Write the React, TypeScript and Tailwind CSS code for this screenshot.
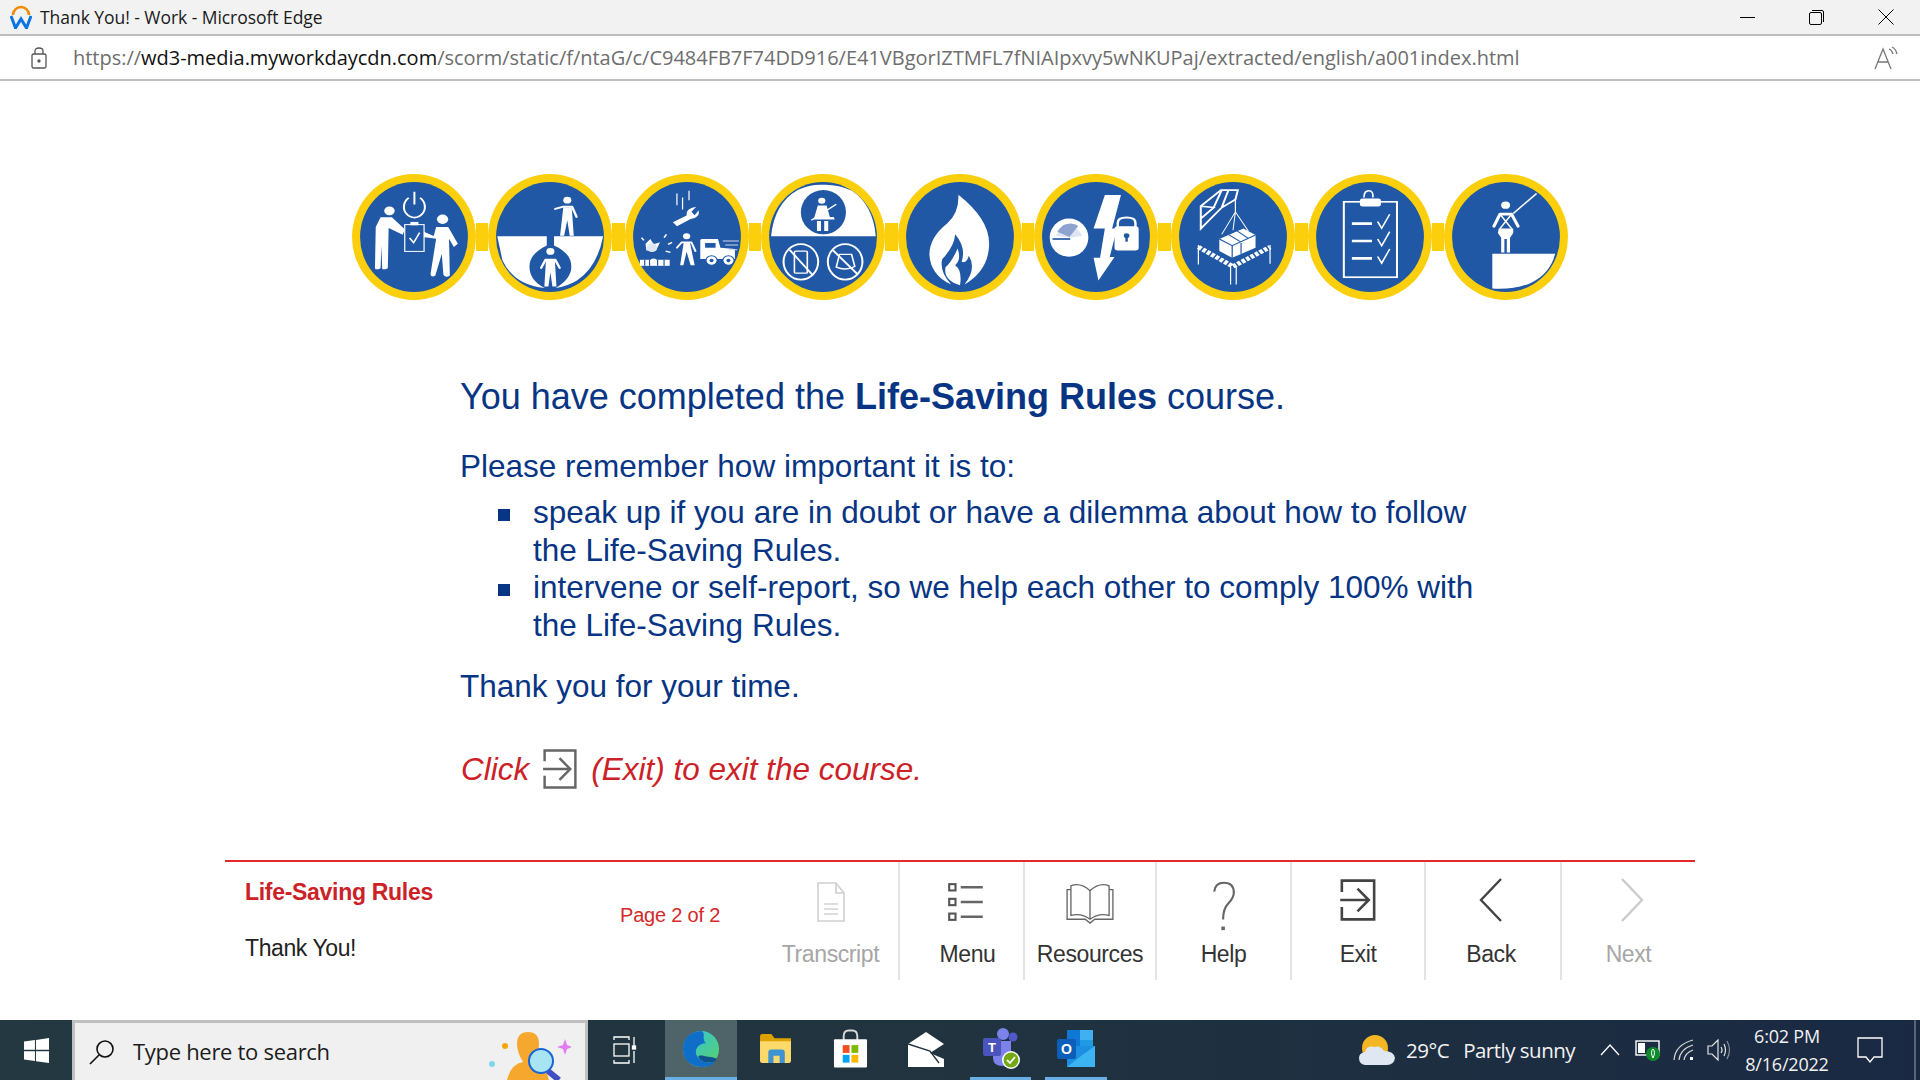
import React from "react";

const W = "#ffffff";
const Blue = "#2158a5";

function Badge({ cx, cy, children }: { cx: number; cy: number; children?: React.ReactNode }) {
  return (
    <svg viewBox="0 0 308 376" preserveAspectRatio="none" className="w-[124px] h-[126px] shrink-0 relative z-10">
      <ellipse cx="154" cy="188" rx="154" ry="188" fill="#fbcf0c" />
      <ellipse cx="154" cy="188" rx="134" ry="164" fill={Blue} />
      <g transform={`translate(${154 - cx} ${188 - cy})`}>{children}</g>
    </svg>
  );
}

function Link() {
  return <div className="w-[12.6px] h-[28px] bg-[#fbcf0c] shrink-0" />;
}

function Body({ d, w = 9, c = W }: { d: string; w?: number; c?: string }) {
  return <path d={d} fill="none" stroke={c} strokeWidth={w} strokeLinecap="round" strokeLinejoin="round" />;
}

function Chain() {
  return (
    <div className="flex items-center w-[1217px] mx-auto">
      <Badge cx={183} cy={235}>
        <circle cx="122" cy="157" r="13" fill={W} />
        <path d="M88 205 L100 176 H128 L160 212 L155 228 L120 208 L118 328 Q104 335 104 328 L102 262 L100 328 Q88 335 86 328 Z" fill={W} />
        <circle cx="254" cy="182" r="14" fill={W} />
        <path d="M205 218 L232 232 L238 205 H268 L292 255 L282 265 L270 240 L272 350 Q262 358 256 348 L252 285 L236 350 Q226 358 224 346 L238 240 L205 235 Z" fill={W} />
        <rect x="160" y="198" width="48" height="80" fill={Blue} stroke={W} strokeWidth="3" />
        <rect x="174" y="190" width="20" height="10" fill={W} />
        <path d="M172 238 L182 252 L197 222" fill="none" stroke={W} strokeWidth="4" />
        <path d="M170 118 A26 32 0 1 0 198 118" fill="none" stroke={W} strokeWidth="5" />
        <path d="M184 100 V138" stroke={W} strokeWidth="5" />
      </Badge>
      <Link />
      <Badge cx={523} cy={230}>
        <path d="M392 228 H515 V255 Q472 280 472 318 Q472 360 510 382 Q435 375 405 300 Z" fill={W} />
        <path d="M533 228 H655 Q640 320 590 360 Q565 378 537 382 Q576 355 576 318 Q576 278 533 255 Z" fill={W} />
        <circle cx="566" cy="120" r="10" fill={W} />
        <Body d="M536 146 L554 140 H578 L589 170" w={6} />
        <path d="M556 142 L548 226 H558 L566 180 L572 226 H582 L577 142 Z" fill={W} />
        <circle cx="524" cy="273" r="10" fill={W} />
        <Body d="M501 322 L512 298 H536 L547 322" w={6} />
        <path d="M513 298 L509 378 H519 L524 335 L529 378 H539 L535 298 Z" fill={W} />
      </Badge>
      <Link />
      <Badge cx={863} cy={230}>
        <path d="M838 100 V135 M852 112 V148 M868 92 V120" stroke={W} strokeWidth="3" fill="none" />
        <path d="M828 186 L862 166 Q858 146 886 140 L874 155 L882 165 L892 150 Q896 172 872 176 L838 198 Z" fill={W} />
        <circle cx="862" cy="228" r="9" fill={W} />
        <Body d="M838 262 L850 246 H874 L884 272" w={5} />
        <path d="M855 245 L846 314 H854 L862 274 L872 314 H882 L870 245 Z" fill={W} />
        <path d="M760 250 L772 236 L780 252 L796 246 L786 270 L762 270 Z" fill={W} />
        <circle cx="776" cy="262" r="13" fill="#dfe7f2" />
        <path d="M806 232 L812 222 M816 252 L826 246 M810 272 L822 276 M756 240 L750 232" stroke={W} strokeWidth="4" />
        <path d="M746 298 H820 V316 H746 Z" fill={W} />
        <path d="M758 298 V316 M770 298 V316 M790 298 V316 M806 298 V316" stroke={Blue} strokeWidth="3" />
        <circle cx="780" cy="302" r="8" fill={W} />
        <path d="M896 290 V240 Q896 236 902 236 H940 L946 262 L982 266 V296 H896 Z" fill={W} />
        <path d="M908 248 H934 V262 H908 Z" fill={Blue} />
        <circle cx="924" cy="300" r="14" fill={W} stroke={Blue} strokeWidth="3" />
        <circle cx="924" cy="300" r="5" fill={Blue} />
        <circle cx="966" cy="300" r="14" fill={W} stroke={Blue} strokeWidth="3" />
        <circle cx="966" cy="300" r="5" fill={Blue} />
        <path d="M952 242 H992 M958 254 H990 M966 268 H988" stroke="#cfd9ea" strokeWidth="3" />
      </Badge>
      <Link />
      <Badge cx={1203} cy={230}>
        <path d="M1074 228 Q1082 130 1140 90 Q1172 72 1203 74 Q1240 72 1275 92 Q1328 135 1334 228 Z" fill={W} />
        <ellipse cx="1204" cy="156" rx="56" ry="66" fill={Blue} />
        <circle cx="1200" cy="122" r="9" fill={W} />
        <path d="M1190 136 H1212 L1220 170 H1230 L1232 178 H1180 L1190 136 Z M1188 182 V212 H1198 V182 Z M1206 182 V212 H1216 V182 Z" fill={W} />
        <path d="M1174 180 L1236 132" stroke={W} strokeWidth="4" />
        <ellipse cx="1148" cy="304" rx="43" ry="53" fill="none" stroke={W} strokeWidth="5" />
        <rect x="1132" y="272" width="32" height="66" rx="3" fill="none" stroke={W} strokeWidth="4" />
        <path d="M1120 268 L1176 342" stroke={W} strokeWidth="5" />
        <ellipse cx="1258" cy="304" rx="43" ry="53" fill="none" stroke={W} strokeWidth="5" />
        <path d="M1236 320 L1244 282 H1274 L1282 318 Q1260 332 1236 320 Z" fill="none" stroke={W} strokeWidth="4" />
        <path d="M1228 270 L1288 340" stroke={W} strokeWidth="5" />
      </Badge>
      <Link />
      <Badge cx={154} cy={188}>
        <path d="M150 62 Q232 140 226 218 Q222 290 165 330 Q196 282 176 244 Q170 268 158 262 Q170 220 142 180 Q140 216 110 254 Q102 290 132 330 Q80 300 78 240 Q78 190 122 148 Q152 116 150 62 Z" fill={W} />
        <path d="M148 222 Q158 256 142 272 Q160 288 154 332 Q112 318 118 278 Q134 262 148 222 Z" fill={W} />
      </Badge>
      <Link />
      <Badge cx={340} cy={230}>
        <ellipse cx="273" cy="232" rx="48" ry="57" fill={W} />
        <path d="M240 226 A37 46 0 0 1 306 226 L274 232 Z" fill="#dfe5f2" />
        <path d="M244 214 A37 46 0 0 1 296 197 L274 230 Z" fill="#8fa3d0" />
        <path d="M232 236 H276" stroke={Blue} strokeWidth="5" />
        <path d="M362 105 H402 L380 205 H392 L374 290 H386 L346 360 L334 292 H350 L362 205 H334 Z" fill={W} />
        <path d="M394 200 V188 Q394 172 416 172 Q438 172 438 188 V205" fill="none" stroke={W} strokeWidth="6" />
        <rect x="386" y="198" width="60" height="72" rx="8" fill={W} />
        <circle cx="416" cy="226" r="7" fill={Blue} />
        <rect x="413" y="228" width="6" height="16" fill={Blue} />
      </Badge>
      <Link />
      <Badge cx={680} cy={230}>
        <path d="M600 138 L650 90 H692 L686 118 L652 142 L600 205 Z M600 138 L632 142 L600 175 M632 142 L652 90 M652 142 L668 92" fill="none" stroke={W} strokeWidth="5" />
        <path d="M686 118 V155" stroke={W} strokeWidth="3" />
        <path d="M686 155 L652 222 M686 155 L718 212 M686 155 L680 210" stroke={W} strokeWidth="2.5" />
        <path d="M646 236 L706 205 L736 224 L736 262 L678 292 L646 272 Z" fill={W} />
        <path d="M646 236 L678 256 L736 224 M678 256 V292 M668 222 L698 244 M690 212 L718 234 M700 248 V280" fill="none" stroke={Blue} strokeWidth="3" />
        <path d="M594 260 L680 318 L772 260" fill="none" stroke={W} strokeWidth="13" strokeDasharray="9 4" />
        <path d="M594 254 V312 M772 254 V310 M674 318 V372 M688 318 V372" stroke={W} strokeWidth="3" />
      </Badge>
      <Link />
      <Badge cx={1019} cy={230}>
        <rect x="954" y="125" width="132" height="225" fill="none" stroke={W} strokeWidth="5" />
        <rect x="994" y="115" width="52" height="24" rx="6" fill={W} />
        <path d="M1004 112 Q1004 92 1016 92 Q1028 92 1026 112" fill="none" stroke={W} strokeWidth="4" />
        <path d="M974 190 H1024 M974 242 H1024 M974 294 H1024" stroke={W} strokeWidth="8" />
        <path d="M1038 184 L1048 204 L1068 162 M1038 236 L1048 256 L1068 214 M1038 288 L1048 308 L1068 266" fill="none" stroke={W} strokeWidth="4" />
      </Badge>
      <Link />
      <Badge cx={1360} cy={230}>
        <path d="M1326 280 H1482 Q1470 340 1420 368 Q1380 388 1326 384 Z" fill={W} />
        <circle cx="1359" cy="135" r="11" fill={W} />
        <Body d="M1330 198 L1345 162 H1374 L1390 198" w={8} />
        <path d="M1342 205 H1378 V218 L1370 232 V276 H1362 V236 H1356 V276 H1348 V232 L1340 218 Z" fill={W} />
        <path d="M1345 162 L1374 205 M1374 162 L1345 205" stroke={W} strokeWidth="4" />
        <path d="M1378 160 L1436 100" stroke={W} strokeWidth="4" />
      </Badge>
    </div>
  );
}

function ExitIcon({ className, color = "#444444" }: { className?: string; color?: string }) {
  return (
    <svg viewBox="0 0 33 39" className={className}>
      <path d="M1.5 12 V1.5 H31.5 V37.5 H1.5 V26" fill="none" stroke={color} strokeWidth="2.4" />
      <path d="M0 19.5 H26 M16 9 L26.5 19.5 L16 30" fill="none" stroke={color} strokeWidth="2.4" />
    </svg>
  );
}

function NavItem({ label, width, muted, border = true, extra = "", children }: { label: string; width: string; muted?: boolean; border?: boolean; extra?: string; children: React.ReactNode }) {
  return (
    <div className={`${width} ${extra} h-[118px] shrink-0 flex flex-col items-center ${border ? "border-r-2 border-[#e4e4e4]" : ""}`}>
      <div className="h-[66px] w-full flex items-center justify-center pt-[10px]">{children}</div>
      <div className={`text-[23px] leading-[26px] mt-[13px] tracking-[-0.4px] ${muted ? "text-[#a6a6a6]" : "text-[#333333]"}`}>{label}</div>
    </div>
  );
}

function Footer() {
  return (
    <div className="w-[1470px] mx-auto border-t-2 border-[#e32a2a] flex">
      <div className="flex-1 pl-[20px] pt-[17px]">
        <div className="text-[23px] leading-[26px] font-bold text-[#cc2127] tracking-[-0.3px]">Life-Saving Rules</div>
        <div className="text-[23px] leading-[26px] text-[#222222] mt-[30px] tracking-[-0.4px]">Thank You!</div>
      </div>
      <div className="w-[151px] pt-[40px] text-[20px] leading-[26px] text-[#d42a2a] tracking-[-0.2px]">Page 2 of 2</div>
      <NavItem label="Transcript" width="w-[129px]" extra="pr-[8px]" muted>
        <svg viewBox="0 0 28 40" className="w-[30px] h-[40px] mt-[3px]">
          <path d="M1 1 H19 L27 11 V39 H1 Z M19 1 V11 H27" fill="none" stroke="#cfcfcf" strokeWidth="1.6" />
          <path d="M7 22 H21 M7 27 H21 M7 32 H21" stroke="#dddddd" strokeWidth="2" />
        </svg>
      </NavItem>
      <NavItem label="Menu" width="w-[125px]" extra="pl-[12px]">
        <svg viewBox="0 0 34 40" className="w-[44px] h-[42px] mt-[3px] mr-[3px]">
          <g fill="none" stroke="#555555" strokeWidth="2">
            <rect x="1" y="3" width="6" height="6" />
            <rect x="1" y="17" width="6" height="6" />
            <rect x="1" y="31" width="6" height="6" />
          </g>
          <path d="M12 6 H33 M12 20 H33 M12 34 H33" stroke="#666666" strokeWidth="2.4" />
        </svg>
      </NavItem>
      <NavItem label="Resources" width="w-[132px]">
        <svg viewBox="0 0 50 44" className="w-[50px] h-[42px] mt-[8px]">
          <path d="M25 8 Q15 -1 5 3 V34 Q16 31 25 38 Q34 31 45 34 V3 Q35 -1 25 8 Z M25 8 V38" fill="none" stroke="#666666" strokeWidth="1.4" />
          <path d="M5 7 H1 V38 H20 L25 42 L30 38 H49 V7 H45" fill="none" stroke="#666666" strokeWidth="1.4" />
        </svg>
      </NavItem>
      <NavItem label="Help" width="w-[135px]">
        <svg viewBox="0 0 28 56" className="w-[26px] h-[50px] mt-[12px]">
          <path d="M3 12 Q4 2 14 2 Q25 2 25 13 Q25 19 19 25 Q13 31 13 43" fill="none" stroke="#666666" strokeWidth="2.4" />
          <rect x="11" y="51" width="4" height="4" fill="#666666" />
        </svg>
      </NavItem>
      <NavItem label="Exit" width="w-[134px]">
        <ExitIcon className="w-[36px] h-[42px]" />
      </NavItem>
      <NavItem label="Back" width="w-[136px]" extra="pr-[4px]">
        <svg viewBox="0 0 24 44" className="w-[24px] h-[44px]">
          <path d="M22 1 L2 22 L22 43" fill="none" stroke="#444444" strokeWidth="2.4" />
        </svg>
      </NavItem>
      <NavItem label="Next" width="w-[133px]" muted border={false}>
        <svg viewBox="0 0 24 44" className="w-[24px] h-[44px] ml-[6px]">
          <path d="M2 1 L22 22 L2 43" fill="none" stroke="#cccccc" strokeWidth="2.4" />
        </svg>
      </NavItem>
    </div>
  );
}

function Tile({ width, on, active, children }: { width: string; on?: boolean; active?: boolean; children?: React.ReactNode }) {
  return (
    <div className={`${width} h-full shrink-0 flex items-center justify-center border-b-[3px] ${on ? "border-[#6aaee6]" : "border-transparent"} ${active ? "bg-[#4f6468]" : ""}`}>
      {children}
    </div>
  );
}

function Taskbar() {
  return (
    <div className="h-[60px] flex items-stretch bg-gradient-to-r from-[#233840] via-[#20333f] to-[#1a2943] text-white shrink-0" style={{ fontFamily: '"Open Sans", sans-serif' }}>
      <div className="w-[72px] shrink-0 flex items-center justify-center">
        <svg viewBox="0 0 24 24" className="w-[25px] h-[25px]" fill="#ffffff">
          <path d="M0 3.4 L10.5 2 V11.3 H0 Z M11.5 1.8 L24 0 V11.3 H11.5 Z M0 12.7 H10.5 V22 L0 20.6 Z M11.5 12.7 H24 V24 L11.5 22.2 Z" />
        </svg>
      </div>
      <div className="w-[516px] shrink-0 bg-[#f0f0f0] border-[3px] border-[#c0c0c0] border-b-0 flex items-center text-[#1c1c1c]">
        <svg viewBox="0 0 26 26" className="w-[26px] h-[26px] ml-[14px]" fill="none" stroke="#111111" strokeWidth="1.6">
          <circle cx="16" cy="10" r="8" />
          <path d="M10 16 L1 25" />
        </svg>
        <span className="ml-[18px] text-[22px] tracking-[-0.3px]">Type here to search</span>
        <svg viewBox="0 0 84 56" className="w-[84px] h-[56px] ml-auto mr-[14px]">
          <circle cx="5" cy="40" r="3" fill="#7fd6e6" />
          <circle cx="18" cy="22" r="3" fill="#f7a600" />
          <path d="M78 15 L80 21 L85 23 L80 25 L78 31 L76 25 L70 23 L76 21 Z" fill="#e37bf2" />
          <path d="M20 56 Q24 40 36 38 Q30 28 30 20 Q30 8 41 8 Q52 8 52 20 Q52 28 46 38 Q58 40 62 56 Z" fill="#f6a72d" />
          <circle cx="54" cy="37" r="12" fill="#a8e4f2" stroke="#1565d8" strokeWidth="2" />
          <path d="M61 47 L72 56" stroke="#3f4fc4" strokeWidth="6" />
        </svg>
      </div>
      <div className="w-[77px] pr-[4px] shrink-0 flex items-center justify-center">
        <svg viewBox="0 0 24 28" className="w-[24px] h-[28px]" fill="none" stroke="#ffffff" strokeWidth="1.3">
          <path d="M1 4 V1 H16 V4 M1 24 V27 H16 V24 M21 1 V10 M21 15 V27" />
          <rect x="1" y="8" width="15" height="12" />
          <rect x="19.5" y="10" width="3" height="3" fill="#ffffff" />
        </svg>
      </div>
      <Tile width="w-[72px]" on active>
        <svg viewBox="0 0 40 40" className="w-[38px] h-[40px]">
          <defs>
            <linearGradient id="edge1" x1="0" y1="0" x2="1" y2="1">
              <stop offset="0" stopColor="#35c1e0" />
              <stop offset="1" stopColor="#57d26a" />
            </linearGradient>
          </defs>
          <circle cx="20" cy="20" r="19" fill="url(#edge1)" />
          <path d="M20 1 C8 1 1 10 1 20 C1 32 10 39 21 39 C28 39 32 37 35 33 C28 36 20 34 16 28 C12 21 17 14 25 14 C20 8 26 3 20 1 Z" fill="#0f6fc8" />
          <path d="M17 28 C20 35 30 36 36 32 C38 29 31 29 26 28 C22 27 18 26 17 28 Z" fill="#10528e" />
        </svg>
      </Tile>
      <Tile width="w-[76px]">
        <svg viewBox="0 0 32 32" className="w-[33px] h-[33px]">
          <path d="M1 4 Q1 2 3 2 H12 L15 6 H31 V28 H1 Z" fill="#dfa200" />
          <path d="M1 9 H31 V28 Q31 30 29 30 H3 Q1 30 1 28 Z" fill="#fbd96a" />
          <path d="M9 30 V20 Q9 17 12 17 H22 Q25 17 25 20 V30 H20 V23 H14 V30 Z" fill="#3f93d2" />
        </svg>
      </Tile>
      <Tile width="w-[75px]">
        <svg viewBox="0 0 36 40" className="w-[35px] h-[40px]">
          <path d="M11 11 V7 Q11 1 16 1 H20 Q25 1 25 7 V11" fill="none" stroke="#d8d8d8" strokeWidth="2" />
          <rect x="1" y="10" width="34" height="29" rx="1" fill="#ffffff" />
          <rect x="10" y="16" width="7" height="8" fill="#f25022" />
          <rect x="19" y="16" width="7" height="8" fill="#7fba00" />
          <rect x="10" y="26" width="7" height="8" fill="#00a4ef" />
          <rect x="19" y="26" width="7" height="8" fill="#ffb900" />
        </svg>
      </Tile>
      <Tile width="w-[75px]">
        <svg viewBox="0 0 36 36" className="w-[36px] h-[36px]">
          <path d="M0 13 L18 1 L36 13 V36 H0 Z" fill="#ffffff" />
          <path d="M0 13 L22 20 L31 32" fill="none" stroke="#21343f" strokeWidth="1.4" />
          <path d="M36 13 L22 22 L36 28 Z" fill="#21343f" />
        </svg>
      </Tile>
      <div className="w-[7px] shrink-0" />
      <Tile width="w-[61px]" on>
        <svg viewBox="0 0 38 42" className="w-[38px] h-[42px]">
          <circle cx="21" cy="6" r="6" fill="#7b83eb" />
          <circle cx="31" cy="9" r="4.5" fill="#5059c9" />
          <path d="M11 13 H29 V30 Q29 38 21 38 Q11 38 11 30 Z" fill="#7b83eb" />
          <rect x="1" y="10" width="18" height="18" rx="2" fill="#4b53bc" />
          <text x="10" y="24" textAnchor="middle" fontSize="13" fontWeight="700" fill="#ffffff" fontFamily="Liberation Sans">T</text>
          <circle cx="29" cy="32" r="9" fill="#ffffff" />
          <circle cx="29" cy="32" r="7.5" fill="#73a812" />
          <path d="M25 32 L28 35 L33 29" fill="none" stroke="#ffffff" strokeWidth="1.8" />
        </svg>
      </Tile>
      <div className="w-[14px] shrink-0" />
      <Tile width="w-[62px]" on>
        <svg viewBox="0 0 38 40" className="w-[38px] h-[40px]">
          <rect x="10" y="1" width="26" height="20" fill="#0f78d4" />
          <rect x="23" y="1" width="13" height="10" fill="#40b0f0" />
          <rect x="23" y="11" width="13" height="10" fill="#1f9be3" />
          <path d="M10 17 H38 V38 H10 Z" fill="#1d8fe0" />
          <path d="M10 38 L24 27 L38 17 V38 Z" fill="#3cb4f2" />
          <rect x="0" y="10" width="19" height="20" rx="2" fill="#0c5fb8" />
          <text x="9.5" y="25" textAnchor="middle" fontSize="14" fontWeight="700" fill="#ffffff" fontFamily="Liberation Sans">O</text>
        </svg>
      </Tile>
      <div className="flex-1" />
      <svg viewBox="0 0 36 32" className="w-[36px] h-[32px] self-center shrink-0">
        <circle cx="16" cy="14" r="13" fill="#f4b622" />
        <path d="M6 31 Q0 30 0 24 Q0 19 6 18 Q8 11 16 13 Q21 11 25 17 Q35 17 36 24 Q35 31 28 31 Z" fill="#dfe8f2" />
      </svg>
      <div className="w-[193px] shrink-0 pl-[11px] flex items-center text-[20.5px] tracking-[-0.5px] text-[#f2f2f2] whitespace-nowrap">
        <span>29°C</span>
        <span className="ml-[14px]">Partly sunny</span>
      </div>
      <div className="w-[44px] shrink-0 flex items-center justify-center">
        <svg viewBox="0 0 20 12" className="w-[20px] h-[12px]"><path d="M1 11 L10 1 L19 11" fill="none" stroke="#ffffff" strokeWidth="1.3" /></svg>
      </div>
      <div className="w-[32px] shrink-0 flex items-center justify-center relative">
        <svg viewBox="0 0 26 24" className="w-[26px] h-[24px]">
          <rect x="1" y="3" width="23" height="14" fill="none" stroke="#ffffff" strokeWidth="1.4" />
          <rect x="3" y="5" width="7" height="10" fill="#ffffff" />
          <circle cx="18" cy="16" r="7" fill="#0d8a2a" />
          <path d="M18 11 Q21 14 18 20 Q15 14 18 11" fill="none" stroke="#ffffff" strokeWidth="1" />
        </svg>
      </div>
      <div className="w-[40px] shrink-0 flex items-center justify-center">
        <svg viewBox="0 0 22 22" className="w-[22px] h-[22px]" fill="none" stroke="#d9d9d9" strokeWidth="1.2">
          <path d="M1 21 Q2 6 20 1 M6 21 Q7 10 20 6 M11 21 Q12 14 20 11" />
          <rect x="17" y="18" width="3" height="3" fill="#ffffff" stroke="none" />
        </svg>
      </div>
      <div className="w-[30px] shrink-0 flex items-center justify-center">
        <svg viewBox="0 0 24 22" className="w-[24px] h-[22px]" fill="none" stroke="#e5e5e5" strokeWidth="1.2">
          <path d="M1 7 H5 L11 1 V21 L5 15 H1 Z M14 8 Q16 11 14 14 M17 5 Q20 11 17 17" />
          <path d="M20 2 Q25 11 20 20" stroke="#8a8f98" />
        </svg>
      </div>
      <div className="w-[106px] shrink-0 flex flex-col items-center justify-center text-[18px] leading-[28px] tracking-[-0.2px] text-[#f2f2f2]">
        <div>6:02 PM</div>
        <div>8/16/2022</div>
      </div>
      <div className="w-[60px] shrink-0 flex items-center justify-center">
        <svg viewBox="0 0 26 26" className="w-[26px] h-[26px]">
          <path d="M1 1 H25 V20 H17 L13 25 L9 20 H1 Z" fill="none" stroke="#ffffff" strokeWidth="1.3" />
        </svg>
      </div>
      <div className="w-[20px] shrink-0"><div className="w-[2px] h-full ml-[14px] bg-[#5b6470]" /></div>
    </div>
  );
}

export default function App() {
  return (
    <div className="w-[1920px] h-[1080px] flex flex-col bg-white overflow-hidden" style={{ fontFamily: '"Liberation Sans", Arial, sans-serif' }}>
      <div className="h-[34px] bg-[#f2f2f2] border-b-2 border-[#bdbdbd] flex items-center shrink-0 box-content" style={{ fontFamily: '"Open Sans", sans-serif' }}>
        <svg viewBox="0 0 22 24" className="w-[22px] h-[24px] ml-[10px] shrink-0">
          <path d="M3 10 A8 8 0 0 1 19 10" fill="none" stroke="#f38b00" strokeWidth="2.6" />
          <path d="M1 11 L5.5 23 L11 14 L16.5 23 L21 11" fill="none" stroke="#0875e1" strokeWidth="3" />
        </svg>
        <span className="ml-[8px] text-[17.5px] tracking-[-0.05px] text-[#1a1a1a]">Thank You! - Work - Microsoft Edge</span>
        <div className="ml-auto flex items-center">
          <div className="w-[69px] flex justify-center"><div className="w-[15px] h-px bg-black" /></div>
          <div className="w-[69px] flex justify-center">
            <svg viewBox="0 0 15 15" className="w-[15px] h-[15px]"><rect x="0.5" y="2.5" width="12" height="12" rx="1.5" fill="none" stroke="#000" /><path d="M3 0.5 H13 Q14.5 0.5 14.5 2 V12" fill="none" stroke="#000" /></svg>
          </div>
          <div className="w-[69px] flex justify-center">
            <svg viewBox="0 0 16 16" className="w-[16px] h-[16px]"><path d="M0.5 0.5 L15.5 15.5 M15.5 0.5 L0.5 15.5" stroke="#000" /></svg>
          </div>
        </div>
      </div>
      <div className="h-[43px] bg-white border-b-2 border-[#bdbdbd] flex items-center shrink-0 box-content" style={{ fontFamily: '"Open Sans", sans-serif' }}>
        <svg viewBox="0 0 16 22" className="w-[16px] h-[22px] ml-[31px] shrink-0" fill="none" stroke="#555555" strokeWidth="1.3">
          <rect x="1" y="7" width="14" height="14" rx="1.5" />
          <path d="M4 7 V4 Q4 1 8 1 Q12 1 12 4 V7" />
          <circle cx="8" cy="14" r="1" fill="#333333" />
        </svg>
        <div className="ml-[26px] text-[20px] tracking-[-0.02px] text-[#6e6e6e] whitespace-nowrap">
          https://<span className="text-[#111111]">wd3-media.myworkdaycdn.com</span>/scorm/static/f/ntaG/c/C9484FB7F74DD916/E41VBgorIZTMFL7fNIAIpxvy5wNKUPaj/extracted/english/a001index.html
        </div>
        <svg viewBox="0 0 26 24" className="w-[26px] h-[24px] ml-auto mr-[20px] shrink-0" fill="none" stroke="#777777" strokeWidth="1.3">
          <path d="M1 23 L9 3 L17 23 M4 16 H14" />
          <path d="M15 3 Q18 4 19 8 M18 1 Q22 3 23 8" />
        </svg>
      </div>
      <main className="flex-1 flex flex-col pt-[93px]">
        <Chain />
        <div className="w-[1000px] mx-auto mt-[76px] text-[#073584]">
          <p className="text-[36px] leading-[42px]">You have completed the <b className="font-bold">Life-Saving Rules</b> course.</p>
          <p className="text-[31.5px] leading-[38px] mt-[29px]">Please remember how important it is to:</p>
          <ul className="text-[31.5px] leading-[37.6px] mt-[9px]">
            <li className="flex">
              <span className="w-[12px] h-[12px] bg-[#073584] mt-[15px] ml-[38px] mr-[23px] shrink-0" />
              <span className="whitespace-nowrap">speak up if you are in doubt or have a dilemma about how to follow<br />the Life-Saving Rules.</span>
            </li>
            <li className="flex">
              <span className="w-[12px] h-[12px] bg-[#073584] mt-[15px] ml-[38px] mr-[23px] shrink-0" />
              <span className="whitespace-nowrap">intervene or self-report, so we help each other to comply 100% with<br />the Life-Saving Rules.</span>
            </li>
          </ul>
          <p className="text-[31.5px] leading-[38px] mt-[23px]">Thank you for your time.</p>
          <p className="text-[31.5px] leading-[44px] italic text-[#cc2127] mt-[42px] flex items-center pl-[1px]">
            <span>Click</span>
            <ExitIcon className="w-[34px] h-[40px] ml-[14px] mr-[14px]" color="#666666" />
            <span>(Exit) to exit the course.</span>
          </p>
        </div>
        <div className="mt-auto mb-[40px]">
          <Footer />
        </div>
      </main>
      <Taskbar />
    </div>
  );
}
